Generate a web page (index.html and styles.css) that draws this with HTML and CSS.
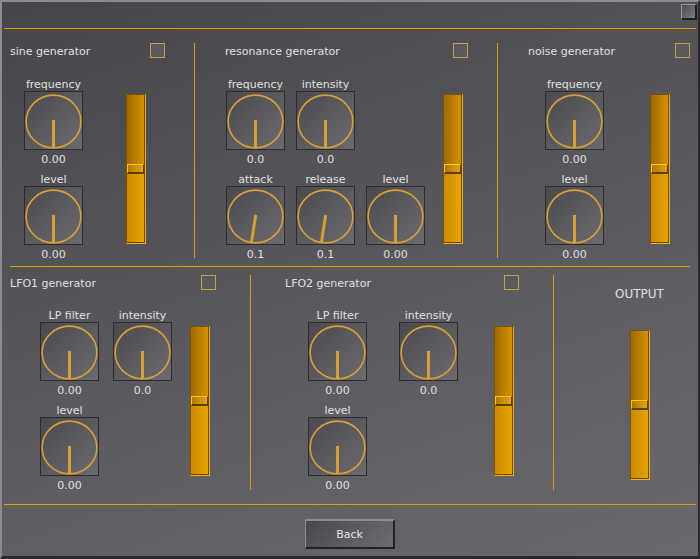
FILE: index.html
```html
<!DOCTYPE html>
<html>
<head>
<meta charset="utf-8">
<title>Generators</title>
<link rel="stylesheet" href="styles.css">
</head>
<body>
<div class="window">
  <div class="titlebar"><span class="closebox"></span></div>
  <div class="rule rule-wide"></div>

  <div class="row row-top">
    <section class="panel p-sine">
      <div class="head"><span class="title">sine generator</span><span class="check"></span></div>
      <div class="body">
        <div class="kcol">
          <div class="knob"><span class="lbl">frequency</span><span class="dial"><svg class="dsvg" viewBox="0 0 57 57" width="57" height="57"><ellipse cx="28.5" cy="29.5" rx="27.4" ry="26.4"/><line x1="28.5" y1="28" x2="28.5" y2="56"/></svg></span><span class="val">0.00</span></div>
          <div class="knob"><span class="lbl">level</span><span class="dial"><svg class="dsvg" viewBox="0 0 57 57" width="57" height="57"><ellipse cx="28.5" cy="29.5" rx="27.4" ry="26.4"/><line x1="28.5" y1="28" x2="28.5" y2="56"/></svg></span><span class="val">0.00</span></div>
        </div>
        <div class="slider"><div class="sin"><div class="tt"></div><div class="thumb"></div><div class="tb"></div></div></div>
      </div>
    </section>
    <div class="vsep"></div>
    <section class="panel p-res">
      <div class="head"><span class="title">resonance generator</span><span class="check"></span></div>
      <div class="body">
        <div class="kgrid">
          <div class="knob"><span class="lbl">frequency</span><span class="dial"><svg class="dsvg" viewBox="0 0 57 57" width="57" height="57"><ellipse cx="28.5" cy="29.5" rx="27.4" ry="26.4"/><line x1="28.5" y1="28" x2="28.5" y2="56"/></svg></span><span class="val">0.0</span></div>
          <div class="knob"><span class="lbl">intensity</span><span class="dial"><svg class="dsvg" viewBox="0 0 57 57" width="57" height="57"><ellipse cx="28.5" cy="29.5" rx="27.4" ry="26.4"/><line x1="28.5" y1="28" x2="28.5" y2="56"/></svg></span><span class="val">0.0</span></div>
          <div class="spacer"></div>
          <div class="knob"><span class="lbl">attack</span><span class="dial"><svg class="dsvg" viewBox="0 0 57 57" width="57" height="57"><ellipse cx="28.5" cy="29.5" rx="27.4" ry="26.4"/><line x1="28.5" y1="28" x2="28.5" y2="56" transform="rotate(9 28.5 29.5)"/></svg></span><span class="val">0.1</span></div>
          <div class="knob"><span class="lbl">release</span><span class="dial"><svg class="dsvg" viewBox="0 0 57 57" width="57" height="57"><ellipse cx="28.5" cy="29.5" rx="27.4" ry="26.4"/><line x1="28.5" y1="28" x2="28.5" y2="56" transform="rotate(9 28.5 29.5)"/></svg></span><span class="val">0.1</span></div>
          <div class="knob"><span class="lbl">level</span><span class="dial"><svg class="dsvg" viewBox="0 0 57 57" width="57" height="57"><ellipse cx="28.5" cy="29.5" rx="27.4" ry="26.4"/><line x1="28.5" y1="28" x2="28.5" y2="56"/></svg></span><span class="val">0.00</span></div>
        </div>
        <div class="slider"><div class="sin"><div class="tt"></div><div class="thumb"></div><div class="tb"></div></div></div>
      </div>
    </section>
    <div class="vsep"></div>
    <section class="panel p-noise">
      <div class="head"><span class="title">noise generator</span><span class="check"></span></div>
      <div class="body">
        <div class="kcol">
          <div class="knob"><span class="lbl">frequency</span><span class="dial"><svg class="dsvg" viewBox="0 0 57 57" width="57" height="57"><ellipse cx="28.5" cy="29.5" rx="27.4" ry="26.4"/><line x1="28.5" y1="28" x2="28.5" y2="56"/></svg></span><span class="val">0.00</span></div>
          <div class="knob"><span class="lbl">level</span><span class="dial"><svg class="dsvg" viewBox="0 0 57 57" width="57" height="57"><ellipse cx="28.5" cy="29.5" rx="27.4" ry="26.4"/><line x1="28.5" y1="28" x2="28.5" y2="56"/></svg></span><span class="val">0.00</span></div>
        </div>
        <div class="slider"><div class="sin"><div class="tt"></div><div class="thumb"></div><div class="tb"></div></div></div>
      </div>
    </section>
  </div>

  <div class="rule rule-mid"></div>

  <div class="row row-bottom">
    <section class="panel p-lfo1">
      <div class="head"><span class="title">LFO1 generator</span><span class="check"></span></div>
      <div class="body">
        <div class="kgrid2">
          <div class="knob"><span class="lbl">LP filter</span><span class="dial"><svg class="dsvg" viewBox="0 0 57 57" width="57" height="57"><ellipse cx="28.5" cy="29.5" rx="27.4" ry="26.4"/><line x1="28.5" y1="28" x2="28.5" y2="56"/></svg></span><span class="val">0.00</span></div>
          <div class="knob"><span class="lbl">intensity</span><span class="dial"><svg class="dsvg" viewBox="0 0 57 57" width="57" height="57"><ellipse cx="28.5" cy="29.5" rx="27.4" ry="26.4"/><line x1="28.5" y1="28" x2="28.5" y2="56"/></svg></span><span class="val">0.0</span></div>
          <div class="knob"><span class="lbl">level</span><span class="dial"><svg class="dsvg" viewBox="0 0 57 57" width="57" height="57"><ellipse cx="28.5" cy="29.5" rx="27.4" ry="26.4"/><line x1="28.5" y1="28" x2="28.5" y2="56"/></svg></span><span class="val">0.00</span></div>
        </div>
        <div class="slider"><div class="sin"><div class="tt"></div><div class="thumb"></div><div class="tb"></div></div></div>
      </div>
    </section>
    <div class="vsep"></div>
    <section class="panel p-lfo2">
      <div class="head"><span class="title">LFO2 generator</span><span class="check"></span></div>
      <div class="body">
        <div class="kgrid2">
          <div class="knob"><span class="lbl">LP filter</span><span class="dial"><svg class="dsvg" viewBox="0 0 57 57" width="57" height="57"><ellipse cx="28.5" cy="29.5" rx="27.4" ry="26.4"/><line x1="28.5" y1="28" x2="28.5" y2="56"/></svg></span><span class="val">0.00</span></div>
          <div class="knob"><span class="lbl">intensity</span><span class="dial"><svg class="dsvg" viewBox="0 0 57 57" width="57" height="57"><ellipse cx="28.5" cy="29.5" rx="27.4" ry="26.4"/><line x1="28.5" y1="28" x2="28.5" y2="56"/></svg></span><span class="val">0.0</span></div>
          <div class="knob"><span class="lbl">level</span><span class="dial"><svg class="dsvg" viewBox="0 0 57 57" width="57" height="57"><ellipse cx="28.5" cy="29.5" rx="27.4" ry="26.4"/><line x1="28.5" y1="28" x2="28.5" y2="56"/></svg></span><span class="val">0.00</span></div>
        </div>
        <div class="slider"><div class="sin"><div class="tt"></div><div class="thumb"></div><div class="tb"></div></div></div>
      </div>
    </section>
    <div class="vsep"></div>
    <section class="panel p-out">
      <div class="outcol">
        <span class="outlbl">OUTPUT</span>
        <div class="slider"><div class="sin"><div class="tt"></div><div class="thumb"></div><div class="tb"></div></div></div>
      </div>
    </section>
  </div>

  <div class="rule rule-wide"></div>

  <div class="footer"><button class="back" type="button">Back</button></div>
</div>
</body>
</html>
```

FILE: styles.css
```css
* { box-sizing: border-box; }
html, body { margin: 0; padding: 0; }
body {
  width: 700px;
  height: 559px;
  font-family: "DejaVu Sans", "Liberation Sans", sans-serif;
  font-size: 11px;
  color: #e0e0e0;
  background: #555559;
  overflow: hidden;
}
.window {
  width: 700px;
  height: 559px;
  border-style: solid;
  border-width: 2px 2px 3px 2px;
  border-color: #8c8c8e #2a2a2c #2a2a2c #8c8c8e;
  background: linear-gradient(160deg, #46464a 0%, #59585d 50%, #6b696e 100%);
  display: flex;
  flex-direction: column;
}
.titlebar {
  height: 26px;
  display: flex;
  justify-content: flex-end;
  align-items: flex-start;
  padding: 2px 1px 0 0;
}
.closebox {
  width: 16px;
  height: 16px;
  border-style: solid;
  border-width: 1px 2px 2px 1px;
  border-color: #9a9a9c #1f1f20 #1f1f20 #9a9a9c;
  background: linear-gradient(135deg, #4e4e52, #7a797e);
}
.rule { height: 1px; background: #e39e00; flex: none; }
.rule-wide { margin: 0 2px; }
.rule-mid { margin: 0 8px; }

.row { height: 237px; display: flex; flex: none; }
.vsep { width: 1px; height: 215px; background: #e09c00; flex: none; }
.row-top .vsep { margin-top: 14px; }
.row-bottom .vsep { margin-top: 8px; }

.panel { display: flex; flex-direction: column; flex: none; }
.head { display: flex; align-items: center; height: 15px; }
.title { line-height: 15px; height: 14px; white-space: nowrap; }
.check {
  width: 15px;
  height: 15px;
  border: 1px solid #c9a045;
  background: #5a5a5e;
  margin-left: auto;
  flex: none;
}
.body { display: flex; align-items: flex-start; }

.p-sine { width: 192px; padding: 14px 29px 0 8px; }
.p-sine .body { margin-top: 19px; padding-left: 14px; }
.p-sine .slider { margin-left: 43px; margin-top: 17px; }

.p-res { width: 302px; padding: 14px 29px 0 30px; }
.p-res .body { margin-top: 19px; padding-left: 1px; }
.p-res .slider { margin-left: 18px; margin-top: 17px; }

.p-noise { flex: 1; padding: 14px 8px 0 30px; }
.p-noise .body { margin-top: 19px; padding-left: 17px; }
.p-noise .slider { margin-left: 46px; margin-top: 17px; }

.p-lfo1 { width: 248px; padding: 8px 34px 0 8px; }
.p-lfo1 .body { margin-top: 18px; padding-left: 30px; }
.p-lfo1 .kgrid2 { column-gap: 14px; }
.p-lfo1 .slider { margin-left: 18px; margin-top: 18px; }

.p-lfo2 { width: 302px; padding: 8px 34px 0 34px; }
.p-lfo2 .body { margin-top: 18px; padding-left: 23px; }
.p-lfo2 .kgrid2 { column-gap: 32px; }
.p-lfo2 .slider { margin-left: 36px; margin-top: 18px; }

.p-out { flex: 1; padding: 20px 0 0 61px; }
.outcol { width: 49px; display: flex; flex-direction: column; align-items: center; }
.outlbl { font-size: 12px; line-height: 14px; white-space: nowrap; }
.p-out .slider { margin-top: 29px; }

.kcol { display: flex; flex-direction: column; gap: 8px; }
.kgrid { display: grid; grid-template-columns: 59px 59px 59px; column-gap: 11px; row-gap: 8px; }
.kgrid2 { display: grid; grid-template-columns: 59px 59px; row-gap: 8px; }

.knob { width: 59px; display: flex; flex-direction: column; align-items: center; }
.lbl { line-height: 16px; height: 14px; white-space: nowrap; }
.val { line-height: 19px; height: 14px; white-space: nowrap; }
.dial {
  display: block;
  width: 59px;
  height: 59px;
  border: 1px solid #2c2c30;
  background: linear-gradient(135deg, #4a4a4e, #6c6a70);
}
.dsvg { display: block; }
.dsvg ellipse { fill: none; stroke: #d6a034; stroke-width: 1.6; }
.dsvg line { stroke: #d6a034; stroke-width: 3; }

.slider {
  width: 20px;
  height: 150px;
  flex: none;
  border-style: solid;
  border-width: 1px;
  border-color: #7a5200 #f0b400 #f0b400 #7a5200;
}
.sin {
  height: 100%;
  display: flex;
  flex-direction: column;
  border-right: 1px solid #6a4600;
  border-bottom: 1px solid #6a4600;
}
.tt { height: 69px; background: linear-gradient(90deg, #a06a00, #d49200); }
.thumb {
  height: 10px;
  border-style: solid;
  border-width: 1px 1px 2px 1px;
  border-color: #ffd000 #5e3e00 #5e3e00 #ffc800;
  background: linear-gradient(90deg, #b07600, #e4a400);
}
.tb { flex: 1; background: linear-gradient(90deg, #cc8a00, #e6a400); }

.footer { flex: 1; display: flex; justify-content: center; align-items: flex-start; padding-top: 14px; }
.back {
  width: 90px;
  height: 30px;
  border-style: solid;
  border-width: 2px 2px 2px 1px;
  border-color: #8e8e90 #222224 #222224 #8e8e90;
  background: linear-gradient(135deg, #48484c, #6e6c71);
  font-family: "DejaVu Sans", "Liberation Sans", sans-serif;
  font-size: 11px;
  color: #e4e4e4;
  padding: 0;
}
```
